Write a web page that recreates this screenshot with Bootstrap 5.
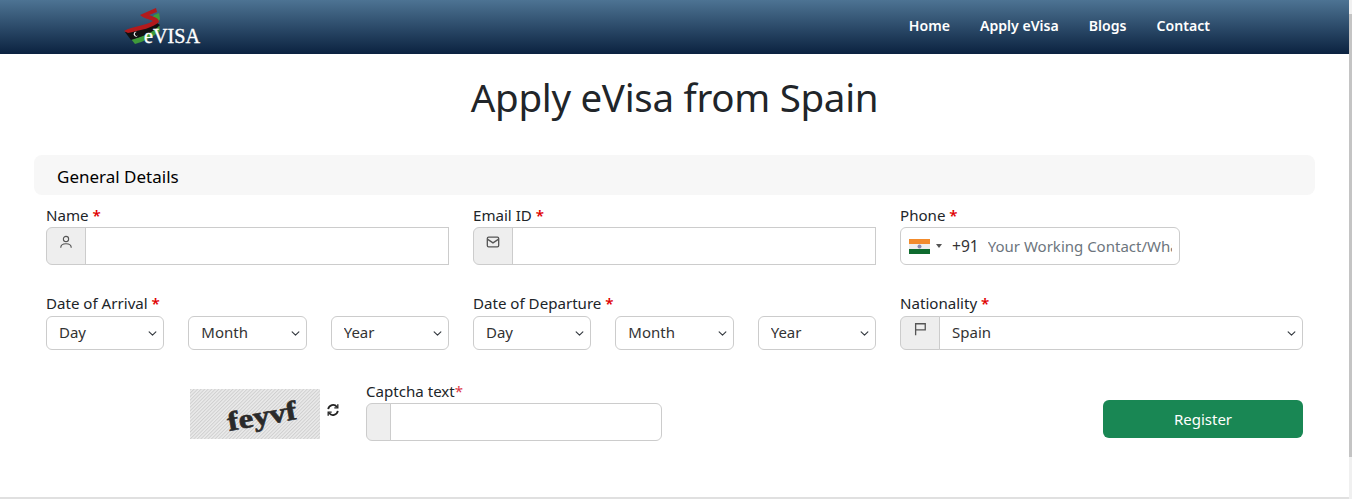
<!DOCTYPE html>
<html lang="en"><head><meta charset="utf-8"><title>Apply eVisa from Spain</title>
<link href="https://cdn.jsdelivr.net/npm/bootstrap@5.3.0/dist/css/bootstrap.min.css" rel="stylesheet">
<style>
body{font-family:"Noto Sans","Open Sans",sans-serif;font-size:15px;color:#212529;height:499px;width:1349px;overflow:hidden}
.topbar{height:54px;padding:0;background:linear-gradient(#4d7393,#0b2240)}
.topbar .container-fluid{padding:0 139px 0 123px}
.logo-svg{display:block}
.topbar .nav-link{color:#fff;font-weight:600;font-size:14.1px;padding:0}
.top-links{gap:30px;flex-direction:row;padding-bottom:3px}
.page-title{font-size:38.5px;letter-spacing:-.3px;font-weight:400;text-align:center;margin:16px 0 31px;line-height:54px}
.form-wrap{margin-left:34px;width:1281px}
.section-bar{background:#f7f7f7;border-radius:8px;height:40px;padding-left:23px;font-size:17px;line-height:43px;color:#000;margin-bottom:10px}
.f-label{display:block;line-height:21px;margin-bottom:1px;font-size:15.1px}
.date-row .f-label{margin-bottom:2px}
.req{color:#e00000;font-weight:600}
.addon{width:40px;justify-content:center;background:#eee;padding:7px 0 0;border-color:#ccc;color:#555;align-items:flex-start}
.tall{height:38px}
.tall .form-control{border-color:#ccc;border-radius:0;height:38px;min-height:38px}
.form-select,.form-control{border-color:#ccc;font-size:15px;color:#333}
.form-select{height:34px;padding:0 20px 3px 12px;background-position:right 5px center;background-size:11px 9px;line-height:30px}
.short{height:34px}
.short .addon{padding-top:5px}
.first-row{margin-bottom:28px}
.nested{--bs-gutter-x:24px}
.cell-pad{padding-left:12px;padding-right:12px}
.phone-box{width:280px;height:38px;border:1px solid #ccc;border-radius:6px;padding:0 7px 0 8px;overflow:hidden}
.caret{flex:none;width:0;height:0;border:3px solid transparent;border-top:4px solid #555;border-bottom:0;margin:0 10px 0 6px}
.dial{flex:none;margin:2px 9px 0 0;color:#333;font-size:15.6px}
.phone-input{border:0;outline:0;padding:0;min-width:0;flex:1;font-size:15px;color:#333}
.phone-input::placeholder{color:#6c757d;opacity:1}
.cap-row{margin-top:32px;padding-left:156px;padding-right:12px;height:58px}
.cap-img{display:block;margin-top:7px}
.refresh{margin:21px 26px 0 6px}
.cap-box{width:296px}
.cap-box .f-label{line-height:19px;margin-bottom:2px}
.cap-box .addon{width:25px}
.cap-box .form-control{border-radius:0 6px 6px 0;height:38px}
.reg-btn{width:200px;height:38px;margin-top:18px;background:#198754;color:#fff;font-size:15px;border-radius:6px;padding:0;border:0;line-height:38px}
.page-col{height:499px}
.foot-line{border-top:2px solid #e0e0e0;margin-top:auto;margin-bottom:0}
.fake-track{position:fixed;top:0;right:0;width:3px;height:499px;background:#f0f0f0}
.fake-thumb{margin-top:14px;height:443px;background:#c4c4c4}
</style></head>
<body>
<div class="d-flex flex-column page-col">
<nav class="navbar topbar">
 <div class="container-fluid d-flex justify-content-between align-items-center">
  <a class="navbar-brand p-0 m-0" href="#" aria-label="eVISA">
   <svg class="logo-svg" width="80" height="46" viewBox="0 0 80 46">
    <path d="M31 11L36 9L37 15L34 20L29 14Z" fill="#3f9a3a"/>
    <path d="M8 35C18 34 30 28 36 20L37 27C30 33 20 38 12 40Z" fill="#3f9a3a"/>
    <path d="M2 28C12 25 24 24 34 19L37 21C30 29 18 33 8 36Z" fill="#111"/>
    <path d="M1 27C10 22 22 22 30 17C26 15 20 14 17 11L33 4L34 8L26 11C31 13 36 14 36 18C30 24 18 26 5 29Z" fill="#b21a1c"/>
    <path d="M14 28a2.4 2.4 0 1 0 1 3.6a2 2 0 1 1-1-3.6Z" fill="#fff"/>
    <text x="21" y="38.5" font-family="Liberation Serif" font-size="20" fill="#fff" stroke="#fff" stroke-width=".35" textLength="56" lengthAdjust="spacingAndGlyphs">eVISA</text>
   </svg>
  </a>
  <div class="navbar-nav top-links">
   <a class="nav-link" href="#">Home</a><a class="nav-link" href="#">Apply eVisa</a><a class="nav-link" href="#">Blogs</a><a class="nav-link" href="#">Contact</a>
  </div>
 </div>
</nav>
<h1 class="page-title">Apply eVisa from Spain</h1>
<form class="form-wrap">
 <div class="section-bar">General Details</div>
 <div class="row first-row g-0 mx-0">
  <div class="col-4 cell-pad">
   <label class="f-label">Name <span class="req">*</span></label>
   <div class="input-group tall"><span class="input-group-text addon"><svg width="14" height="14" viewBox="0 0 16 16" fill="none" stroke="#555" stroke-width="1.3"><circle cx="8" cy="4.5" r="3"/><path d="M2 14.5c0-3.5 2.5-4.5 6-4.5s6 1 6 4.5"/></svg></span><input class="form-control" type="text"></div>
  </div>
  <div class="col-4 cell-pad">
   <label class="f-label">Email ID <span class="req">*</span></label>
   <div class="input-group tall"><span class="input-group-text addon"><svg width="14" height="14" viewBox="0 0 16 16" fill="none" stroke="#555" stroke-width="1.5"><rect x="1.5" y="2.5" width="13" height="11" rx="1.5"/><path d="M2 5l6 4 6-4"/></svg></span><input class="form-control" type="email"></div>
  </div>
  <div class="col-4 cell-pad">
   <label class="f-label">Phone <span class="req">*</span></label>
   <div class="phone-box d-flex align-items-center">
    <svg class="flex-shrink-0" width="21" height="15" viewBox="0 0 21 15"><rect width="21" height="5" fill="#f28b2c"/><rect y="5" width="21" height="5" fill="#eee"/><rect y="10" width="21" height="5" fill="#0e6b2e"/><circle cx="10.5" cy="7.5" r="2" fill="#8a8ab0"/></svg>
    <span class="caret"></span><span class="dial">+91</span><input class="phone-input" type="tel" placeholder="Your Working Contact/WhatsApp Number">
   </div>
  </div>
 </div>
 <div class="row g-0 mx-0 date-row">
  <div class="col-4 cell-pad">
   <label class="f-label">Date of Arrival <span class="req">*</span></label>
   <div class="row nested gx-4"><div class="col-4"><select class="form-select"><option>Day</option></select></div><div class="col-4"><select class="form-select"><option>Month</option></select></div><div class="col-4"><select class="form-select"><option>Year</option></select></div></div>
  </div>
  <div class="col-4 cell-pad">
   <label class="f-label">Date of Departure <span class="req">*</span></label>
   <div class="row nested gx-4"><div class="col-4"><select class="form-select"><option>Day</option></select></div><div class="col-4"><select class="form-select"><option>Month</option></select></div><div class="col-4"><select class="form-select"><option>Year</option></select></div></div>
  </div>
  <div class="col-4 cell-pad">
   <label class="f-label">Nationality <span class="req">*</span></label>
   <div class="input-group short"><span class="input-group-text addon"><svg width="14" height="14" viewBox="0 0 16 16" fill="none" stroke="#555" stroke-width="1.5"><path d="M3 15V2h11v7H3"/></svg></span><select class="form-select"><option>Spain</option></select></div>
  </div>
 </div>
 <div class="d-flex justify-content-between cap-row">
  <div class="d-flex">
   <svg class="cap-img" width="130" height="50" viewBox="0 0 130 50">
    <defs><pattern id="hatch" width="2.5" height="2.5" patternUnits="userSpaceOnUse" patternTransform="rotate(45)"><rect width="2.5" height="2.5" fill="#ebebeb"/><rect width="1" height="2.5" fill="#cfcfcf"/></pattern></defs>
    <rect width="130" height="50" fill="url(#hatch)"/>
    <text x="39" y="42" font-family="Liberation Serif" font-weight="700" font-size="27" fill="#2a2a2a" stroke="#2a2a2a" stroke-width=".6" transform="rotate(-10 39 42)" textLength="70" lengthAdjust="spacingAndGlyphs">feyvf</text>
   </svg>
   <svg class="refresh" width="14" height="14" viewBox="0 0 16 16" fill="none" stroke="#222" stroke-width="2"><path d="M2.5 7a5.6 5.6 0 0 1 10-2.5"/><path d="M13.5 9a5.6 5.6 0 0 1-10 2.5"/><path d="M13.5 1.5v4h-4" stroke-width="1.5"/><path d="M2.5 14.5v-4h4" stroke-width="1.5"/></svg>
   <div class="cap-box">
    <label class="f-label">Captcha text<span class="text-danger">*</span></label>
    <div class="input-group tall"><span class="input-group-text addon"></span><input class="form-control" type="text"></div>
   </div>
  </div>
  <button class="btn reg-btn" type="button">Register</button>
 </div>
</form>
<div class="foot-line"></div>
</div>
<div class="fake-track"><div class="fake-thumb"></div></div>
</body></html>
